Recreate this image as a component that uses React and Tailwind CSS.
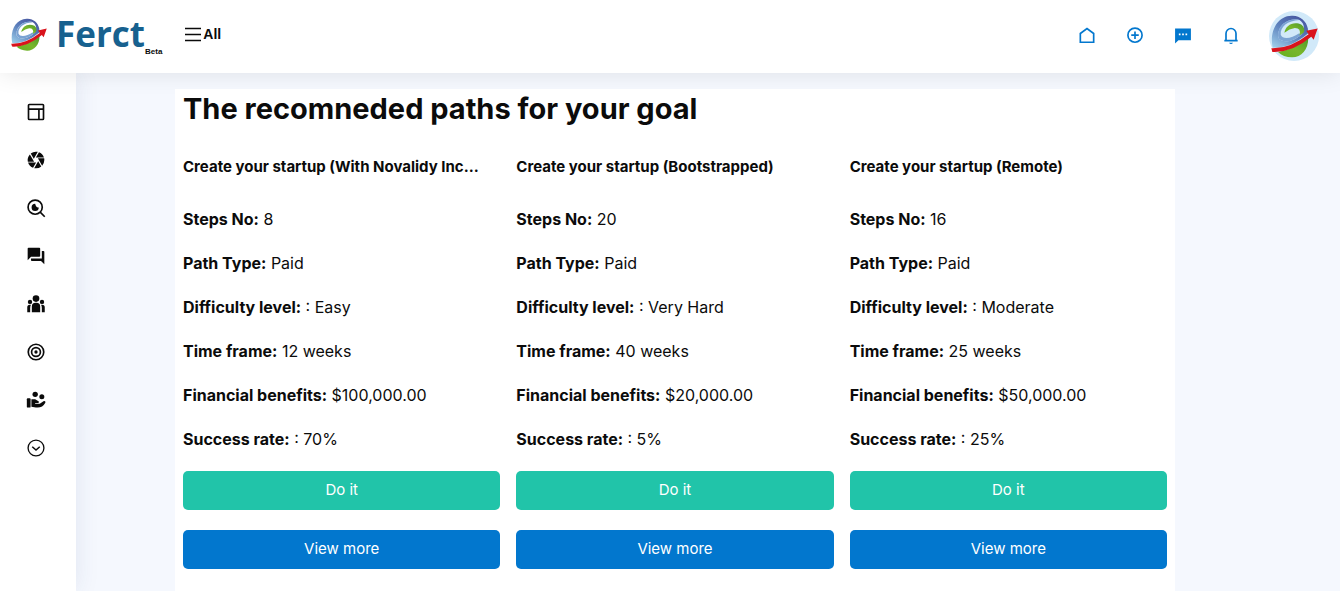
import { MdCamera, MdQuestionAnswer } from 'react-icons/md';

const paths = [
  {
    title: 'Create your startup (With Novalidy Inc...',
    steps: '8',
    type: 'Paid',
    difficulty: 'Easy',
    time: '12 weeks',
    benefits: '$100,000.00',
    success: '70%',
  },
  {
    title: 'Create your startup (Bootstrapped)',
    steps: '20',
    type: 'Paid',
    difficulty: 'Very Hard',
    time: '40 weeks',
    benefits: '$20,000.00',
    success: '5%',
  },
  {
    title: 'Create your startup (Remote)',
    steps: '16',
    type: 'Paid',
    difficulty: 'Moderate',
    time: '25 weeks',
    benefits: '$50,000.00',
    success: '25%',
  },
];

function Globe({ id, className }) {
  return (
    <svg viewBox="18 18 146 140" className={className} aria-hidden="true">
      <defs>
        <linearGradient id={`${id}-blue`} x1="0.8" y1="0" x2="0.1" y2="1">
          <stop offset="0" stopColor="#46549f" />
          <stop offset="0.5" stopColor="#5d82bd" />
          <stop offset="1" stopColor="#9bcbe8" />
        </linearGradient>
        <linearGradient id={`${id}-green`} x1="1" y1="0" x2="0" y2="1">
          <stop offset="0" stopColor="#4f9a2c" />
          <stop offset="0.5" stopColor="#78b62a" />
          <stop offset="1" stopColor="#66b022" />
        </linearGradient>
      </defs>
      <path d="M42 137 Q90 128 132 96 C132 130 112 153 84 153 C66 153 52 147 42 137Z" fill={`url(#${id}-green)`} />
      <path
        d="M26 124 C16 78 38 30 82 29 C106 27 127 44 131 68 L131 82 C90 116 58 125 26 124Z M106 42 C68 34 38 62 43 94 C50 112 90 108 112 84 C120 74 124 54 106 42Z"
        fillRule="evenodd"
        fill={`url(#${id}-blue)`}
      />
      <path d="M43 94 C38 62 68 34 106 42 C70 44 48 62 50 86 C56 102 84 96 104 82 L112 84 C90 108 50 112 43 94Z" fill="#7ba3d3" />
      <path d="M61 80 C64 58 88 44 112 56 Q124 66 118 80 L106 88 Q112 66 92 66 Q76 68 61 80Z" fill={`url(#${id}-green)`} />
      <path d="M22 126 Q77 128 133 84 L126 74 L160 67 L148 101 L141 92 Q84 140 25 137Z" fill="#d9131c" />
    </svg>
  );
}

function Icon({ children, className = 'size-5' }) {
  return (
    <svg viewBox="0 0 24 24" fill="none" stroke="currentColor" strokeWidth="2" className={className} aria-hidden="true">
      {children}
    </svg>
  );
}

const sideItems = [
  {
    label: 'Dashboard',
    icon: (
      <Icon>
        <rect x="3" y="3" width="18" height="18" rx="1" />
        <path d="M3 8.5h18M15.5 8.5V21" />
      </Icon>
    ),
  },
  { label: 'Explore', icon: <MdCamera className="size-5" /> },
  {
    label: 'Search',
    icon: (
      <Icon>
        <circle cx="11" cy="11" r="8.5" />
        <path d="M17 17l5.5 5.5" />
        <path d="M11 7a4.3 4.3 0 1 0 4.3 4.3Q12 12 11 7Z" fill="currentColor" stroke="none" />
      </Icon>
    ),
  },
  { label: 'Discussions', icon: <MdQuestionAnswer className="size-5" /> },
  {
    label: 'Community',
    icon: (
      <Icon>
        <g fill="currentColor" stroke="none">
          <circle cx="12" cy="5.5" r="4" />
          <circle cx="4.8" cy="9.5" r="2.6" />
          <circle cx="19.2" cy="9.5" r="2.6" />
          <path d="M7 22v-7a4.5 4.5 0 0 1 4.5-4.5h1A4.5 4.5 0 0 1 17 15v7Z" />
          <path d="M1.5 22v-6a3 3 0 0 1 3-3h1.4Q5 14.5 5 17v5ZM22.5 22v-6a3 3 0 0 0-3-3h-1.4Q19 14.5 19 17v5Z" />
        </g>
      </Icon>
    ),
  },
  {
    label: 'Goals',
    icon: (
      <Icon>
        <circle cx="12" cy="12" r="9.3" />
        <circle cx="12" cy="12" r="5.3" />
        <circle cx="12" cy="12" r="2" fill="currentColor" stroke="none" />
      </Icon>
    ),
  },
  {
    label: 'Funding',
    icon: (
      <Icon>
        <g fill="currentColor" stroke="none">
          <circle cx="11" cy="5.2" r="3.2" />
          <circle cx="19" cy="8" r="3" />
          <rect x="1" y="10" width="4.5" height="11" rx="1" />
          <path d="M6.5 11h4.5l4 2.5c1 .7.5 2-.5 2H11v1h5.5l4.5-3c1.5-1 3 .5 2 2-2 3.5-5 5.5-9 5.5-3 0-5-1-7.5-1Z" />
        </g>
      </Icon>
    ),
  },
  {
    label: 'More',
    icon: (
      <Icon>
        <circle cx="12" cy="12" r="9.5" strokeWidth="1.6" />
        <path d="M7.5 10.5L12 14.5l4.5-4" strokeWidth="1.8" />
      </Icon>
    ),
  },
];

const topItems = [
  {
    label: 'Home',
    icon: (
      <Icon>
        <path d="M4 9L12 3l8 6v10.5H4Z" />
      </Icon>
    ),
  },
  {
    label: 'Create',
    icon: (
      <Icon>
        <circle cx="12" cy="11" r="8.5" />
        <path d="M12 6.5v9M7.5 11h9" />
      </Icon>
    ),
  },
  {
    label: 'Messages',
    icon: (
      <Icon>
        <path d="M2.5 3h19v14H6.5L2.5 21Z" fill="currentColor" stroke="none" />
        <path d="M7 10h2M11 10h2M15 10h2" stroke="white" />
      </Icon>
    ),
  },
  {
    label: 'Notifications',
    icon: (
      <Icon>
        <path d="M6 17.5V9a6 6 0 0 1 12 0v8.5M4 17.5h16" />
        <path d="M9.5 20h5q-2.500 3-5 0Z" fill="currentColor" stroke="none" />
      </Icon>
    ),
  },
];

function Detail({ label, value }) {
  return (
    <p className="text-[16px] leading-7">
      <strong className="font-bold">{label}</strong> {value}
    </p>
  );
}

function PathCard({ path }) {
  return (
    <article className="flex min-w-0 flex-col gap-4">
      <h2 className="mb-2 text-[15px] leading-7 font-bold">{path.title}</h2>
      <Detail label="Steps No:" value={path.steps} />
      <Detail label="Path Type:" value={path.type} />
      <Detail label="Difficulty level:" value={`: ${path.difficulty}`} />
      <Detail label="Time frame:" value={path.time} />
      <Detail label="Financial benefits:" value={path.benefits} />
      <Detail label="Success rate:" value={`: ${path.success}`} />
      <div className="mt-0.5 flex flex-col gap-5 text-[15px] text-white">
        <button type="button" className="h-[39px] rounded-[5px] bg-[#21c4a9] hover:bg-[#1bb098]">
          Do it
        </button>
        <button type="button" className="h-[39px] rounded-[5px] bg-[#0277ce] hover:bg-[#0268b5]">
          View more
        </button>
      </div>
    </article>
  );
}

export default function App() {
  return (
    <div className="flex min-h-screen flex-col bg-[#f5f8fe] font-[Inter,sans-serif] text-[#0b0b0b]">
      <header className="z-10 flex h-[73px] items-center justify-between bg-white pr-[21px] pb-0.5 pl-2.5 shadow-[0_0_25px_rgba(0,0,0,0.1)]">
        <div className="flex items-center gap-[22px]">
          <a href="#" className="flex items-center">
            <Globe id="logo" className="mb-1 h-9 w-[38px]" />
            <span className="ml-2 pb-1 font-['Open_Sans',sans-serif] text-[35px] leading-none font-bold text-[#17618f]">Ferct</span>
            <span className="mt-8 font-['Liberation_Sans',sans-serif] text-[8px] leading-none font-bold">Beta</span>
          </a>
          <button type="button" className="flex items-center pb-0.5 font-['Liberation_Sans',sans-serif] text-[14px] font-bold">
            <svg viewBox="0 0 18 16" className="mr-px h-4 w-[18px]" stroke="currentColor" strokeWidth="1.3" aria-hidden="true">
              <path d="M1 1.5h16M1 7.5h16M1 13.5h16" />
            </svg>
            All
          </button>
        </div>
        <nav className="flex items-center gap-7">
          {topItems.map((item) => (
            <button key={item.label} type="button" aria-label={item.label} className="text-[#0277ce]">
              {item.icon}
            </button>
          ))}
          <button type="button" aria-label="Profile" className="flex size-[50px] items-center justify-center rounded-full bg-[#d1e9f9]">
            <Globe id="avatar" className="h-[47px] w-[49px]" />
          </button>
        </nav>
      </header>

      <div className="flex flex-1">
        <aside className="w-[76px] shrink-0 bg-white shadow-[0_0_25px_rgba(40,60,120,0.1)]">
          <nav className="flex flex-col items-center gap-7 pt-[29px] pr-1">
            {sideItems.map((item) => (
              <button key={item.label} type="button" aria-label={item.label}>
                {item.icon}
              </button>
            ))}
          </nav>
        </aside>

        <main className="flex min-w-0 flex-1 pt-4 pr-[165px] pl-[99px]">
          <section className="z-10 min-w-0 flex-1 bg-white px-2 pb-5">
            <h1 className="text-[29px] leading-10 font-bold">The recomneded paths for your goal</h1>
            <div className="mt-6 grid grid-cols-3 gap-4">
              {paths.map((path) => (
                <PathCard key={path.title} path={path} />
              ))}
            </div>
          </section>
        </main>
      </div>
    </div>
  );
}
